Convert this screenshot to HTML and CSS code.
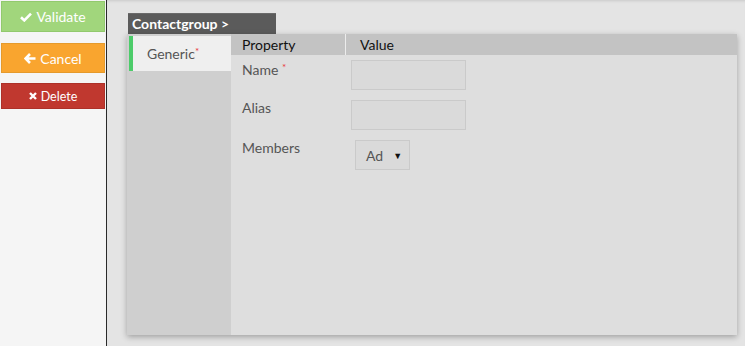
FILE: index.html
```html
<!DOCTYPE html>
<html>
<head>
<meta charset="utf-8">
<link rel="stylesheet" href="styles.css">
</head>
<body>
<div class="app">
  <aside class="sidebar">
    <button class="btn btn-validate">
      <svg class="ico" width="12" height="10" viewBox="0 0 12 10"><path d="M1 5.2 L4.3 8.4 L11 1.6" fill="none" stroke="#fff" stroke-width="2.6"/></svg>
      <span>Validate</span>
    </button>
    <button class="btn btn-cancel">
      <svg class="ico" width="12" height="11" viewBox="0 0 12 11"><path d="M6 1 L1.5 5.5 L6 10 M2 5.5 H11.5" fill="none" stroke="#fff" stroke-width="2.6" stroke-linejoin="miter"/></svg>
      <span>Cancel</span>
    </button>
    <button class="btn btn-delete">
      <svg class="ico" width="8" height="8" viewBox="0 0 8 8"><path d="M1 1 L7 7 M7 1 L1 7" fill="none" stroke="#fff" stroke-width="2.4"/></svg>
      <span>Delete</span>
    </button>
  </aside>
  <main class="main">
    <div class="panel-title">Contactgroup &gt;</div>
    <div class="panel">
      <div class="tabs">
        <div class="tab active">Generic<span class="req">*</span></div>
      </div>
      <div class="content">
        <div class="thead">
          <div class="th th-prop">Property</div>
          <div class="th th-val">Value</div>
        </div>
        <div class="row">
          <div class="label">Name <span class="req">*</span></div>
          <div class="value"><div class="input"></div></div>
        </div>
        <div class="row">
          <div class="label">Alias</div>
          <div class="value"><div class="input"></div></div>
        </div>
        <div class="row">
          <div class="label">Members</div>
          <div class="value"><div class="select"><span>Ad</span><span class="caret">&#9660;</span></div></div>
        </div>
      </div>
    </div>
  </main>
</div>
</body>
</html>
```
FILE: styles.css
```css
* { box-sizing: border-box; }
html, body { margin: 0; padding: 0; }
body {
  font-family: Lato, "Liberation Sans", sans-serif;
  width: 745px;
  height: 346px;
  overflow: hidden;
}
.app {
  display: flex;
  height: 346px;
}
.sidebar {
  width: 107px;
  flex: none;
  background: #f5f5f5;
  border-right: 1px solid #2a2a2a;
  padding: 1px 1px 0 1px;
  display: flex;
  flex-direction: column;
}
.btn {
  display: flex;
  align-items: center;
  justify-content: center;
  gap: 4px;
  width: 104px;
  border: 1px solid;
  color: #fff;
  font-family: Lato, "Liberation Sans", sans-serif;
  padding: 0;
  margin: 0;
}
.btn-validate {
  height: 31px;
  background: #a1d67c;
  border-color: #92c96d;
  font-size: 14px;
}
.btn-cancel {
  margin-top: 11px;
  height: 30px;
  background: #f9a52f;
  border-color: #e59a2c;
  font-size: 14px;
}
.btn-delete {
  margin-top: 10px;
  height: 26px;
  background: #c0382f;
  border-color: #ad3129;
  font-size: 12.5px;
}
.btn .ico { display: block; }
.main {
  flex: 1;
  background: #e4e4e4;
  padding: 13px 8px 0 20px;
  box-shadow: inset 0 3px 3px -2px rgba(0,0,0,0.12);
}
.panel-title {
  margin-left: 1px;
  width: 148px;
  height: 21px;
  background: #5b5b5b;
  color: #fff;
  font-weight: bold;
  font-size: 14px;
  line-height: 20px;
  padding-left: 4px;
  border-top: 1px solid #6a6a6a;
}
.panel {
  width: 610px;
  height: 301px;
  display: flex;
  box-shadow: 0 2px 6px rgba(0,0,0,0.3);
}
.tabs {
  width: 104px;
  flex: none;
  background: #cfcfcf;
  padding-top: 2px;
  padding-left: 2px;
}
.tab {
  height: 35px;
  background: #efefef;
  border-left: 4px solid #4ccc6a;
  color: #555;
  font-size: 14px;
  padding-left: 14px;
  line-height: 31px;
}
.req { color: #e8383d; font-size: 10px; vertical-align: 4px; }
.content {
  flex: 1;
  background: #dedede;
}
.thead {
  display: flex;
  height: 21px;
  background: #c3c3c3;
  color: #111;
  font-size: 14px;
  line-height: 21px;
}
.th-prop {
  width: 115px;
  padding-left: 11px;
  border-right: 1px solid #ececec;
}
.th-val { padding-left: 14px; }
.row {
  display: flex;
  height: 40px;
}
.label {
  width: 116px;
  padding-left: 11px;
  padding-top: 4px;
  color: #555;
  font-size: 14px;
  line-height: 17px;
}
.value { padding-top: 5px; padding-left: 4px; }
.input {
  width: 115px;
  height: 30px;
  background: #dadada;
  border: 1px solid #cacaca;
}
.select {
  margin-left: 4px;
  width: 55px;
  height: 30px;
  background: #dadada;
  border: 1px solid #cacaca;
  display: flex;
  align-items: center;
  padding-left: 10px;
  color: #555;
  font-size: 14px;
}
.caret {
  font-size: 9px;
  color: #111;
  margin-left: 10px;
}
```
